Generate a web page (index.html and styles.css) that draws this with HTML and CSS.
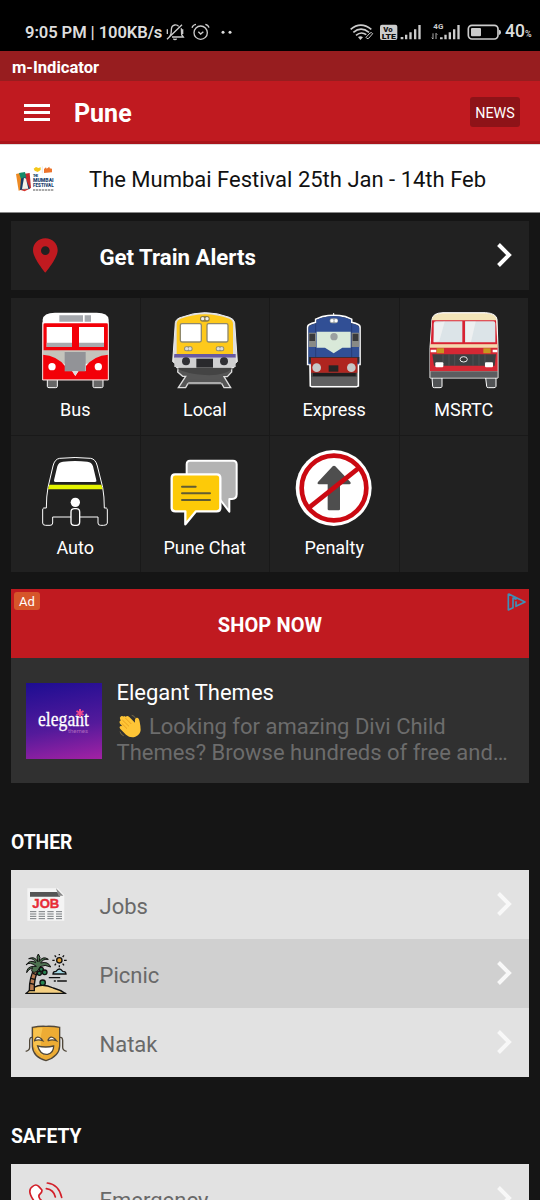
FILE: index.html
```html
<!DOCTYPE html>
<html lang="en">
<head>
<meta charset="utf-8">
<title>m-Indicator</title>
<link rel="stylesheet" href="styles.css">
</head>
<body>
<div class="screen">
  <div class="status">
    <span class="status-text">9:05 PM | 100KB/s</span>
    <svg class="status-left" viewBox="495 36 210 60" width="70" height="20" fill="none" stroke="#ccc" stroke-width="4">
      <path d="M508 80q6-5 6-20q0-13 10-15q8-1 12 4M544 55l1 19 5 7H516M501 88l45-44M520 86q5 5 10 0M502 58v14M548 58v14"/>
      <circle cx="602" cy="68" r="20"/><path d="M595 65l7 7 8-7M576 53q3-9 12-10M616 43q9 2 11 10"/>
      <circle cx="669" cy="67" r="4.5" fill="#ddd" stroke="none"/><circle cx="690" cy="67" r="4.5" fill="#ddd" stroke="none"/>
    </svg>
    <svg class="status-right" viewBox="237 36 456 60" width="152" height="20" fill="#ccc">
      <g fill="none" stroke="#ccc" stroke-width="5"><path d="M242 58q30-25 62 0M250 67q23-19 47 0M258 76q15-13 31-2"/><path d="M288 82l12-13q6-3 8 2l-12 14q-6 3-8-3z" stroke-width="3"/></g>
      <path d="M264 81q8-5 15 1l-8 8z"/>
      <rect x="330" y="44" width="52" height="46" rx="6"/>
      <g fill="#111" font-family="Roboto, sans-serif" font-weight="900"><text x="340" y="66" font-size="22" textLength="28" lengthAdjust="spacingAndGlyphs">Vo</text><text x="335" y="86" font-size="22" textLength="43" lengthAdjust="spacingAndGlyphs">LTE</text></g>
      <path d="M392 81h8v7h-8zM405 74h7v14h-7zM418 67h7v21h-7zM432 58h7v30h-7zM445 45h7v43h-7zM510 82h8v6h-8zM523 74h7v14h-7zM536 67h7v21h-7zM549 58h7v30h-7zM562 45h7v43h-7z"/>
      <text x="490" y="58" font-family="Roboto, sans-serif" font-weight="700" font-size="23" textLength="30" lengthAdjust="spacingAndGlyphs">4G</text>
      <path d="M489 70v17M485 83l4 4M498 87V70l4 4" fill="none" stroke="#ccc" stroke-width="2.5"/>
      <rect x="595" y="46" width="89" height="41" rx="11" fill="none" stroke="#ccc" stroke-width="5"/>
      <rect x="603" y="54" width="30" height="25" rx="3"/><path d="M687 59q6 0 6 8t-6 8z"/>
    </svg>
    <span class="battery">40<small>%</small></span>
  </div>
  <div class="appstrip">m-Indicator</div>
  <header class="header">
    <div class="menu"><i></i><i></i><i></i></div>
    <h1>Pune</h1>
    <span class="news">NEWS</span>
  </header>
  <div class="promo">
    <svg class="promo-logo" viewBox="45 72 120 84" width="40" height="28">
      <path d="M48 99l17-4 4 50-13 4z" fill="#ed8a24"/><path d="M74 98l15-2 4 45-15 5z" fill="#c62a2c"/><path d="M57 96l18-3 4 17-16 5z" fill="#148a69"/><path d="M63 113l12-5 15 36-30 3z" fill="#163c68"/><path d="M72 110l6 3 7 30-19 1z" fill="#f3f1e7"/><path d="M62 147l26-4-14 8z" fill="#d6322b"/>
      <path d="M101 83l7-5 7 3 7-2v8l-9 6-9-4z" fill="#f4c719"/><path d="M127 76v21" stroke="#bbb"/><path d="M132 84l6-5 2 4 8-6 1 5 7 1v11l-24 2z" fill="#ed742c"/>
      <g font-family="Roboto, sans-serif" font-weight="900" fill="#18406c"><text x="99" y="108" font-size="10" textLength="15">THE</text><text x="99" y="123" font-size="17" textLength="62" lengthAdjust="spacingAndGlyphs">MUMBAI</text><text x="99" y="137" font-size="17" textLength="62" lengthAdjust="spacingAndGlyphs">FESTIVAL</text></g>
      <path d="M99 147h62" stroke="#555" stroke-width="3" stroke-dasharray="7 2"/>
    </svg>
    <span>The Mumbai Festival 25th Jan - 14th Feb</span>
  </div>
  <main>
    <div class="alerts">
      <svg class="pin" viewBox="0 0 75 103" width="25" height="35"><path fill="#c01a20" fill-rule="evenodd" d="M37 0C16 0 0 16 0 36c0 24 37 67 37 67s37-43 37-67C74 16 58 0 37 0zm0 24a13 13 0 1 1 0 26 13 13 0 0 1 0-26z"/></svg>
      <b>Get Train Alerts</b>
      <svg class="chev" viewBox="0 0 16 26" width="16" height="26"><path d="M2.5 2.5L13 13 2.5 23.5"/></svg>
    </div>
    <div class="grid">
      <div class="cell">
        <svg class="tile" viewBox="69 30 252 252">
          <path d="M112 243h30v22q0 4-5 4h-20q-5 0-5-4zM249 243h30v22q0 4-5 4h-20q-5 0-5-4z" fill="#666" stroke="#fff" stroke-width="3"/>
          <path d="M98 246V65q2-21 37-21h125q35 0 36 21v181z" fill="#fff"/>
          <path d="M148 52h71v19h-71zM224 52h19v19h-19z" fill="#a5a8ad"/>
          <path d="M100 80q0-4 5-4h185q4 0 4 4v79H100z" fill="#f30008"/>
          <path d="M110 87h76v60h-76zM207 87h75v60h-75z" fill="#fff"/><path d="M110 134h76v13h-76zM207 134h75v13h-75z" fill="#a9aaae"/>
          <path d="M98 157h197v40H98z" fill="#c4c4bc"/>
          <path d="M98 170q43 3 67 34v15h21l10 15 10-15h22v-15q24-31 67-34v75H98z" fill="#f30008"/>
          <path d="M164 162h63v58h-63z" fill="#929397"/><path d="M187 220h17l-8 13z" fill="#ddd"/>
          <circle cx="126" cy="206" r="11" fill="#fff"/><circle cx="265" cy="206" r="11" fill="#fff"/>
          <path d="M98 73v173h197V73" fill="none" stroke="#f1dedd" stroke-width="3"/>
        </svg><span>Bus</span></div>
      <div class="cell">
        <svg class="tile" viewBox="69 30 252 252">
          <path d="M115 206h160v16l-13 14h-10l20 33h-20l-9-16h-97l-9 16h-22l22-34h-9l-15-13z" fill="#555" stroke="#ddd" stroke-width="4"/>
          <path d="M145 241h97M138 252h112" stroke="#555" stroke-width="6"/><path d="M139 259h110l-7-7h-96z" fill="#aaa"/>
          <path d="M98 191l8-117q2-12 18-16 71-28 144 0 14 5 16 16l8 117-10 8v10H109v-10z" fill="#ddd" stroke="#eee" stroke-width="3"/>
          <path d="M110 168V77q0-10 12-15 73-27 146 0 11 5 11 15v91z" fill="#fec91b"/>
          <path d="M103 168h184v11H102z" fill="#6759a1"/><path d="M103 179h184v28H103z" fill="#cfcfd0"/>
          <rect x="121" y="77" width="63" height="55" rx="5" fill="#fff" stroke="#8f886b" stroke-width="4"/><rect x="201" y="77" width="63" height="55" rx="5" fill="#fff" stroke="#8f886b" stroke-width="4"/>
          <rect x="180" y="54" width="29" height="17" rx="8" fill="#8b7b44"/><circle cx="188" cy="62" r="5" fill="#eee"/><circle cx="201" cy="62" r="5" fill="#eee"/>
          <rect x="132" y="145" width="26" height="15" rx="7" fill="#8d8c75"/><circle cx="140" cy="152" r="5" fill="#ddd"/><circle cx="150" cy="152" r="5" fill="#ddd"/><rect x="227" y="145" width="26" height="15" rx="7" fill="#8d8c75"/><circle cx="235" cy="152" r="5" fill="#ddd"/><circle cx="245" cy="152" r="5" fill="#ddd"/>
          <path d="M169 182h50v27h-50z" fill="#29292c"/><circle cx="138" cy="190" r="12" fill="#303034"/><circle cx="252" cy="190" r="12" fill="#303034"/><path d="M115 209h160v5q-25 20-80 17t-80-17z" fill="#444"/>
        </svg><span>Local</span></div>
      <div class="cell">
        <svg class="tile" viewBox="67 30 252 252">
          <path d="M192 45v12" stroke="#fff" stroke-width="3"/>
          <path d="M122 264l-1-65h-7V86q0-8 24-13v-9l20-8q35-8 69 0l19 8v9q25 5 25 13v113h-5v65l-6 2H127z" fill="#444" stroke="#fff" stroke-width="5"/>
          <path d="M116 90q0-9 24-14V65q53-22 104 0v11q25 5 25 14v109H116z" fill="#314f95"/>
          <path d="M138 76v122M246 76v122" stroke="#283d77" stroke-width="3"/>
          <path d="M117 104h22v43h-22zM246 104h23v43h-23z" fill="#888a86"/><path d="M119 107h17v22h-17zM249 107h17v22h-17z" fill="#393a3b"/>
          <path d="M141 101h102v48h-25l-26 17-26-17h-25z" fill="#d9e9d9"/><circle cx="193" cy="116" r="11" fill="#9ba0a0"/>
          <rect x="180" y="61" width="25" height="15" rx="7" fill="#9da4a6"/><circle cx="187" cy="68" r="5" fill="#fff"/><circle cx="199" cy="68" r="5" fill="#fff"/>
          <path d="M118 177h151v17H118z" fill="#292d34"/><path d="M124 179h139v45H124z" fill="#af251f"/><path d="M177 202h29v19h-29z" fill="#252525"/><circle cx="141" cy="209" r="13" fill="#c5c8c8"/><circle cx="245" cy="209" r="13" fill="#c5c8c8"/>
          <path d="M130 225h128v10H130z" fill="#1f1f20"/><path d="M125 236h137v27H125z" fill="#606061"/>
        </svg><span>Express</span></div>
      <div class="cell">
        <svg class="tile" viewBox="66 30 252 252">
          <path d="M96 239h30v26q0 4-6 4h-17q-5 0-5-4zM257 239h31v26q-1 4-6 4h-17q-5 0-5-4z" fill="#515355" stroke="#fff" stroke-width="3"/>
          <path d="M90 240V149l6-85q2-19 33-20h128q32 2 34 20l3 85v91z" fill="#faebd4" stroke="#fff" stroke-width="3"/>
          <path d="M96 67q0-19 32-20h130q31 1 31 20z" fill="#f3e5b9"/>
          <path d="M96 67h192l4 73H92z" fill="#d82232"/><path d="M101 77q0-7 7-7h79v63h-86zM195 70h85q6 0 6 7v56h-91z" fill="#dce4e8"/><path d="M103 75l31-4-16 58-17 3zM198 71h29l-14 61h-15z" fill="#eef0f1"/>
          <path d="M90 140h203v80H90z" fill="#d52834"/><path d="M90 139h203v10H90z" fill="#f4d8ad"/>
          <path d="M92 155h17v8H92zM278 155h14v8h-14z" fill="#fff"/><path d="M110 151h22v15h-22zM250 151h22v15h-22z" fill="#c7971f"/>
          <path d="M97 169h191l-4 34H102z" fill="#3d4042"/><path d="M129 169v34M147 169v34M164 169v34M219 169v34M237 169v34M255 169v34" stroke="#58585a" stroke-width="2"/>
          <ellipse cx="191" cy="184" rx="11" ry="8" fill="#363636" stroke="#eee" stroke-width="3"/><rect x="106" y="193" width="24" height="15" rx="3" fill="#fff"/><rect x="255" y="193" width="24" height="15" rx="3" fill="#fff"/>
          <path d="M91 220h202v19H91z" fill="#5b5d60"/>
        </svg><span>MSRTC</span></div>
      <div class="cell">
        <svg class="tile" viewBox="69 31 252 252">
          <path d="M109 217q0-35 5-62l15-64q5-21 20-23 46-5 93 0 15 2 20 23l16 64q5 27 5 62h6q3 1 3 6v39q0 7-11 7h-9q-8 0-8-7v-18H128v18q0 7-8 7h-13q-9 0-9-7v-39q0-5 3-6z" fill="#212121" stroke="#fff" stroke-width="3"/>
          <path d="M132 134l10-42q4-13 17-14 36-4 73 0 13 1 17 14l10 42q2 5-4 5H136q-5 0-4-5z" fill="#fff"/>
          <path d="M118 147h156l4 14H114z" fill="#e4f400"/>
          <circle cx="196" cy="200" r="14" fill="#fff"/><rect x="183" y="219" width="26" height="50" rx="10" fill="#242424" stroke="#fff" stroke-width="4"/>
        </svg><span>Auto</span></div>
      <div class="cell">
        <svg class="tile" viewBox="460 32 252 252">
          <path d="M541 76h129q11 0 11 11v90q0 14-14 14h-8v38l-29-38h-88q-11 0-11-11V87q0-11 10-11z" fill="#b3b3b3" stroke="#fff" stroke-width="6" stroke-linejoin="round"/>
          <path d="M496 117h125q11 0 11 11v89q0 11-11 11h-62l-32 39v-39h-30q-11 0-11-11v-89q0-11 10-11z" fill="#fdca08" stroke="#fff" stroke-width="7" stroke-linejoin="round"/>
          <path d="M517 154h41M517 174h84M517 194h84" stroke="#615c32" stroke-width="6" stroke-linecap="round"/>
        </svg><span>Pune Chat</span></div>
      <div class="cell">
        <svg class="tile" viewBox="67 32 252 252">
          <circle cx="192" cy="158" r="114" fill="#fff"/><circle cx="193" cy="158" r="97" fill="#fff" stroke="#cb0912" stroke-width="14"/>
          <path d="M174 222v-75h-26q-7-1-3-7l44-47q4-4 8 0l45 47q3 6-3 7h-28v75q0 3-4 3h-29q-4 0-4-3z" fill="#4e4e4e"/>
          <path d="M119 216L266 99" stroke="#cb0912" stroke-width="14"/>
        </svg><span>Penalty</span></div>
      <div class="cell"></div>
    </div>
    <section class="ad">
      <div class="cta"><span class="badge">Ad</span><b>SHOP NOW</b>
        <svg class="choices" viewBox="0 0 60 60" width="20" height="20" fill="none" stroke="#3f8fb5" stroke-width="5"><path d="M4 5v49l14-7V18l9 4M4 5l50 25-27 13V28M22 21h7" stroke-linejoin="round"/></svg>
      </div>
      <div class="ad-body">
        <div class="elegant"><svg viewBox="0 0 76 76" width="76" height="76"><text x="12" y="43" font-family="Liberation Serif, serif" font-size="21" fill="#fff" stroke="#fff" stroke-width=".3" textLength="51" lengthAdjust="spacingAndGlyphs">elegant</text><path d="M54 26v8M50.5 28l7 4M57.5 28l-7 4" stroke="#f0498f" stroke-width="2"/><text x="42" y="50" font-family="Roboto, sans-serif" font-size="6" fill="#ad69be" textLength="20">themes</text></svg></div>
        <div class="ad-copy"><h2>Elegant Themes</h2>
          <p><svg class="wave" viewBox="355 385 75 75" width="25" height="25"><path d="M378 393q5-5 11 1l17 17q-2-15 6-15 6 0 8 12 3 14 3 25-1 14-16 20-15 5-28-6l-17-17q-5-6 1-9 2-1 5 1l-7-8q-4-7 3-10l-2-2q-4-6 2-10 4-2 8 1-1-4 6 0z" fill="#fec536"/><path d="M366 413l16 16M368 403l20 19M377 397l18 18" stroke="#e59a1d" stroke-width="2.5"/><path d="M361 438q3 10 11 12M396 389q8 1 11 8" stroke="#9a8550" stroke-width="2" fill="none"/></svg> Looking for amazing Divi Child<br>Themes? Browse hundreds of free and…</p></div>
      </div>
    </section>
    <h3>OTHER</h3>
    <div class="list">
      <div class="row"><svg class="ricon" viewBox="72 59 135 120"><path d="M82 69h92l19 20v77H82z" fill="#f4f4f4"/><path d="M90 80h82l9 14H90z" fill="#555"/><path d="M168 69l22 22h-15z" fill="#888"/><text x="97" y="129" font-family="Liberation Sans, sans-serif" font-size="36" font-weight="700" fill="#e72c37" stroke="#e72c37" textLength="81" lengthAdjust="spacingAndGlyphs">JOB</text><path d="M90 139h96M90 146h96M90 153h96M90 160h96" stroke="#767b7e" stroke-width="3" stroke-dasharray="19 7"/></svg><span>Jobs</span><svg class="chev" viewBox="0 0 16 26" width="16" height="26"><path d="M2.5 2.5L13 13 2.5 23.5"/></svg></div>
      <div class="row alt"><svg class="ricon" viewBox="72 266 135 120" stroke="#111" stroke-width="4">
        <path d="M78 385q35-40 82-17 22 6 37 17z" fill="#f4cf82"/><path d="M88 376q-1-38 17-71l11 5q-15 30-13 66z" fill="#b87a50"/><path d="M90 354l13 3M93 339l13 4M99 324l12 5"/>
        <path d="M109 303q-20-16-31-4 12-18 29-7-5-14-21-12 18-9 27 9-5-17 2-23 9 10 2 23 12-19 28-7-16-2-23 11 23-6 30 12-17-9-32-1-5 15-17 17-13-1-5-14-13 4-18 15 0-17 19-19z" fill="#4d7250" stroke-width="3"/>
        <g fill="#278451"><circle cx="124" cy="312" r="6"/><circle cx="134" cy="321" r="7"/><circle cx="118" cy="324" r="6"/><circle cx="128" cy="352" r="8"/></g>
        <circle cx="178" cy="285" r="8" fill="#df9d30"/><path d="M178 264v6M178 300v6M157 285h7M192 285h8M164 270l4 5M192 270l-4 5M164 300l4-5M192 300l-4-5"/>
        <path d="M159 326q0-8 9-8 10-14 20 0 10 0 10 8z" fill="#a2d7e3"/><path d="M148 337h31M163 347h3M173 347h26" stroke-linecap="round"/><path d="M77 385h121" stroke-width="6"/>
      </svg><span>Picnic</span><svg class="chev" viewBox="0 0 16 26" width="16" height="26"><path d="M2.5 2.5L13 13 2.5 23.5"/></svg></div>
      <div class="row"><svg class="ricon" viewBox="72 472 135 120" fill="none" stroke="#51483a" stroke-width="4">
        <path d="M98 516q-8-3-9 8v21q0 10-12 12M179 516q8-3 9 8v21q0 10 12 12"/><path d="M97 485q21-4 41-3 21-1 41 3v56q-1 31-41 44-39-12-41-43z" fill="#edac34"/><path d="M101 489q16-4 27-3-12 40 1 85-28-17-28-37z" fill="#f8c34d" stroke="none"/>
        <path d="M104 523q6-15 20-4l4 6q-13-5-24 0zM144 523q7-15 20-4l5 6q-13-5-24 0zM113 541q24 6 48 0 0 20-18 25-22 3-30-25z" fill="#fff"/>
      </svg><span>Natak</span><svg class="chev" viewBox="0 0 16 26" width="16" height="26"><path d="M2.5 2.5L13 13 2.5 23.5"/></svg></div>
    </div>
    <h3>SAFETY</h3>
    <div class="list">
      <div class="row"><svg class="ricon" viewBox="72 207 135 120" fill="none" stroke="#d31f29" stroke-width="5" stroke-linecap="round"><path d="M98 229q10-8 18 0l9 10q3 6-5 13-7 5 0 15l22 22q9 7 15 0 7-7 13-1l10 10q6 7-2 14-21 19-57-17-48-50-23-66z" fill="#fff"/><path d="M142 219q34 4 43 43M139 236q22 3 27 25"/></svg><span>Emergency</span><svg class="chev" viewBox="0 0 16 26" width="16" height="26"><path d="M2.5 2.5L13 13 2.5 23.5"/></svg></div>
    </div>
  </main>
</div>
</body>
</html>
```
FILE: styles.css
```css
* { box-sizing: border-box; }
body { margin: 0; background: #151515; font-family: Roboto, sans-serif; color: #fff; }
svg { display: block; flex: none; }
h1, h2, h3, p { margin: 0; }
.screen { width: 540px; height: 1200px; overflow: hidden; background: #151515; }
.status { height: 51px; background: #000; display: flex; align-items: center; padding: 14px 0 0 25px; color: #ddd; }
.status-text { width: 140px; font-size: 16.6px; font-weight: 600; letter-spacing: -.1px; line-height: 20px; white-space: nowrap; }
.status-left { margin-top: -2px; }
.status-right { margin: -2px 0 0 114px; }
.battery { margin-left: 4px; font-size: 17.5px; font-weight: 500; line-height: 20px; white-space: nowrap; }
.battery small { font-size: 9px; }
.appstrip { height: 30px; background: #971d1f; padding: 2px 0 0 12px; font-size: 16.6px; line-height: 30px; font-weight: 700; }
.header { height: 63px; background: #c01a20; border-bottom: 3px solid #a9151b; display: flex; align-items: center; padding: 2px 20px 0 24px; }
.menu { width: 26px; display: grid; gap: 4px; }
.menu i { height: 3px; background: #fff; }
.header h1 { margin-left: 24px; padding-top: 3px; font-size: 25px; line-height: 30px; font-weight: 700; }
.news { margin-left: auto; width: 50px; height: 30px; border-radius: 3px; background: #8e1318; font-size: 14.3px; line-height: 32px; text-align: center; }
.promo { height: 69px; display: flex; align-items: center; padding-left: 15px; background: #fff; color: #111; border-bottom: 1px solid #888; border-top: 1px solid #ddd; font-size: 22px; white-space: nowrap; }
.promo span { padding-top: 2px; }
.promo-logo { margin-right: 34px; }
main { padding: 8px 11px 0; }
.alerts { height: 69px; background: #212121; display: flex; align-items: center; padding: 0 16px 0 22px; font-size: 22.2px; }
.alerts b { margin-left: 41.5px; line-height: 26px; padding-top: 2px; }
.chev { margin-left: auto; margin-right: 1px; margin-top: -1px; fill: none; stroke: #fff; stroke-width: 4; }
.grid { width: 517px; height: 274px; margin-top: 8px; display: grid; grid-template-columns: repeat(4, 1fr); grid-template-rows: repeat(2, 1fr); gap: 1px; background: #191919; }
.cell { background: #212121; padding-top: 10px; display: flex; flex-direction: column; align-items: center; font-size: 18px; }
.tile { width: 84px; height: 84px; }
.cell span { margin-top: 6px; line-height: 24px; }
.ad { margin-top: 17px; height: 194px; background: #303030; }
.cta { height: 69px; display: flex; justify-content: space-between; background: #c01a20; font-size: 20px; }
.cta b { line-height: 73px; letter-spacing: .1px; }
.badge { width: 26px; height: 18px; margin: 3px; border-radius: 3px; background: #d6552a; font-size: 13px; line-height: 19px; text-align: center; }
.choices { margin: 3px 2px 0 10px; }
.ad-body { display: flex; padding: 25px 0 0 15px; }
.elegant { width: 76px; height: 76px; background: linear-gradient(170deg, #1d0d92, #541a9b 58%, #a322a4); }
.ad-copy { margin: -4px 0 0 14.5px; white-space: nowrap; }
.ad-copy h2 { font-size: 22px; font-weight: 400; line-height: 28px; }
.ad-copy p { margin-top: 7px; font-size: 22px; line-height: 26px; color: #6c6c6c; }
.wave { display: inline-block; width: 27px; height: 25px; vertical-align: -5px; }
h3 { margin-top: 48px; font-size: 19.3px; font-weight: 700; line-height: 24px; }
.list { margin-top: 15px; }
.row { height: 69px; background: #e2e2e2; color: #696969; display: flex; align-items: center; padding: 0 16px 0 13px; font-size: 22px; }
.row.alt { background: #d0d0d0; }
.row > span { margin-left: 30.5px; line-height: 26px; padding-top: 4px; }
.ricon { width: 45px; height: 40px; }
.row .chev { stroke: #f8f8f8; }
```
